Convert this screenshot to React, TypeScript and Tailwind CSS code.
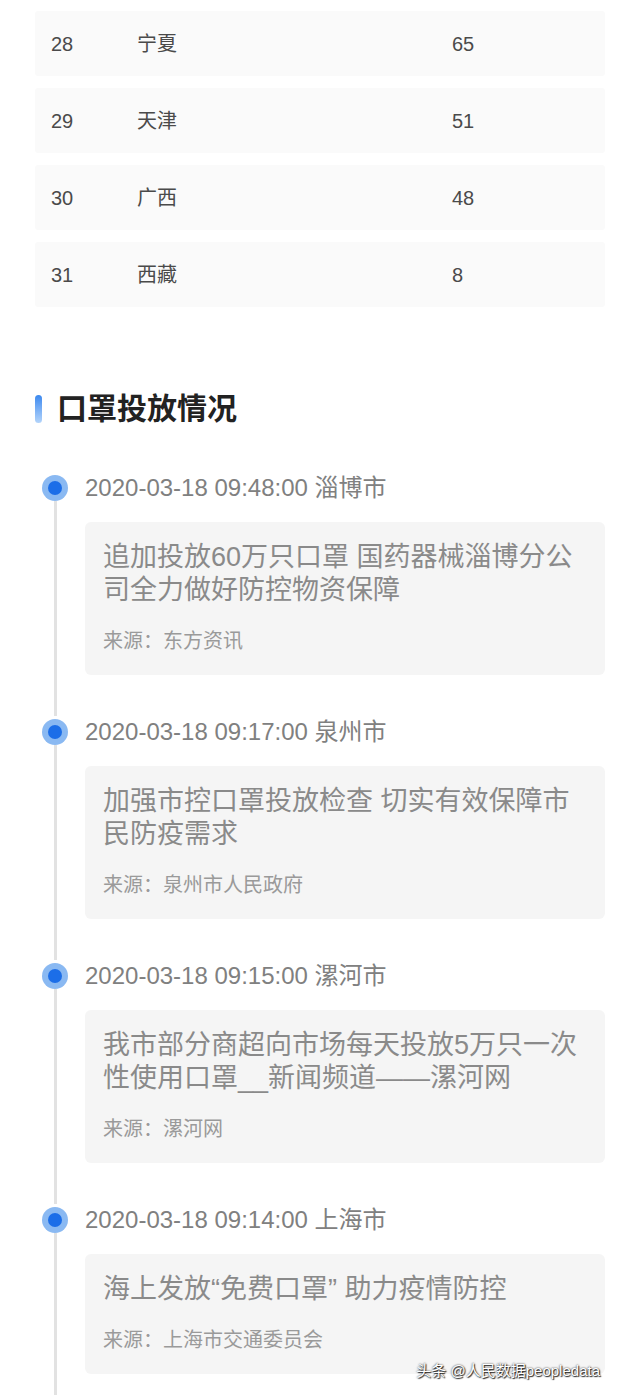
const rows = [
  { rank: 28, name: "宁夏", count: 65 },
  { rank: 29, name: "天津", count: 51 },
  { rank: 30, name: "广西", count: 48 },
  { rank: 31, name: "西藏", count: 8 },
];

const news = [
  {
    time: "2020-03-18 09:48:00",
    city: "淄博市",
    lines: ["追加投放60万只口罩 国药器械淄博分公", "司全力做好防控物资保障"],
    source: "东方资讯",
  },
  {
    time: "2020-03-18 09:17:00",
    city: "泉州市",
    lines: ["加强市控口罩投放检查 切实有效保障市", "民防疫需求"],
    source: "泉州市人民政府",
  },
  {
    time: "2020-03-18 09:15:00",
    city: "漯河市",
    lines: ["我市部分商超向市场每天投放5万只一次", "性使用口罩__新闻频道——漯河网"],
    source: "漯河网",
  },
  {
    time: "2020-03-18 09:14:00",
    city: "上海市",
    lines: ["海上发放“免费口罩” 助力疫情防控"],
    source: "上海市交通委员会",
  },
];

const font = "font-['Liberation_Sans','Noto_Sans_CJK_SC',sans-serif]";

export default function App() {
  return (
    <div className={`relative h-[1395px] overflow-hidden bg-white px-[35px] ${font}`}>
      <ul className="flex flex-col gap-[12px] pt-[11px]">
        {rows.map((row) => (
          <li
            key={row.rank}
            className="flex h-[65px] items-center rounded-[3px] bg-[#fafafa] pl-[16px] text-[20px] text-[#4a4a4a]"
          >
            <span className="w-[86px]">{row.rank}</span>
            <span className="w-[315px]">{row.name}</span>
            <span>{row.count}</span>
          </li>
        ))}
      </ul>

      <h2 className="mt-[82px] flex h-[40px] items-center gap-[15px]">
        <span className="h-[28px] w-[7px] rounded-[4px] bg-gradient-to-b from-[#3a88ee] to-[#b3d4fa]" />
        <span className="text-[30px] font-bold leading-[40px] text-[#222]">口罩投放情况</span>
      </h2>

      <ol className="mt-[43px]">
        {news.map((item, i) => (
          <li key={item.time} className="flex">
            <div className="flex w-[40px] shrink-0 flex-col items-center">
              <span className="mt-[3px] flex h-[26px] w-[26px] items-center justify-center rounded-full bg-[#8ab9f2]">
                <span className="h-[14px] w-[14px] rounded-full bg-[#1c6ee8]" />
              </span>
              <span className="w-[3px] flex-1 bg-[#e2e2e2]" />
            </div>
            <div className={`ml-[10px] flex-1 ${i === news.length - 1 ? "pb-[22px]" : "pb-[41px]"}`}>
              <p className="text-[24px] leading-[32px] text-[#808080]">
                {item.time} {item.city}
              </p>
              <div className="mt-[18px] rounded-[6px] bg-[#f5f5f5] px-[18px] pt-[19px] pb-[20px]">
                <p className="text-[27px] leading-[33px] text-[#8a8a8a]">
                  {item.lines.map((line) => (
                    <span key={line} className="block whitespace-nowrap">
                      {line}
                    </span>
                  ))}
                </p>
                <p className="mt-[20px] text-[20px] leading-[28px] text-[#9a9a9a]">
                  来源：{item.source}
                </p>
              </div>
            </div>
          </li>
        ))}
      </ol>

      <span className="absolute right-[40px] bottom-[13px] text-[15px] text-white [text-shadow:0_0_2px_rgba(0,0,0,0.9),1px_1px_1px_rgba(0,0,0,0.8)]">
        头条 @人民数据peopledata
      </span>
    </div>
  );
}
